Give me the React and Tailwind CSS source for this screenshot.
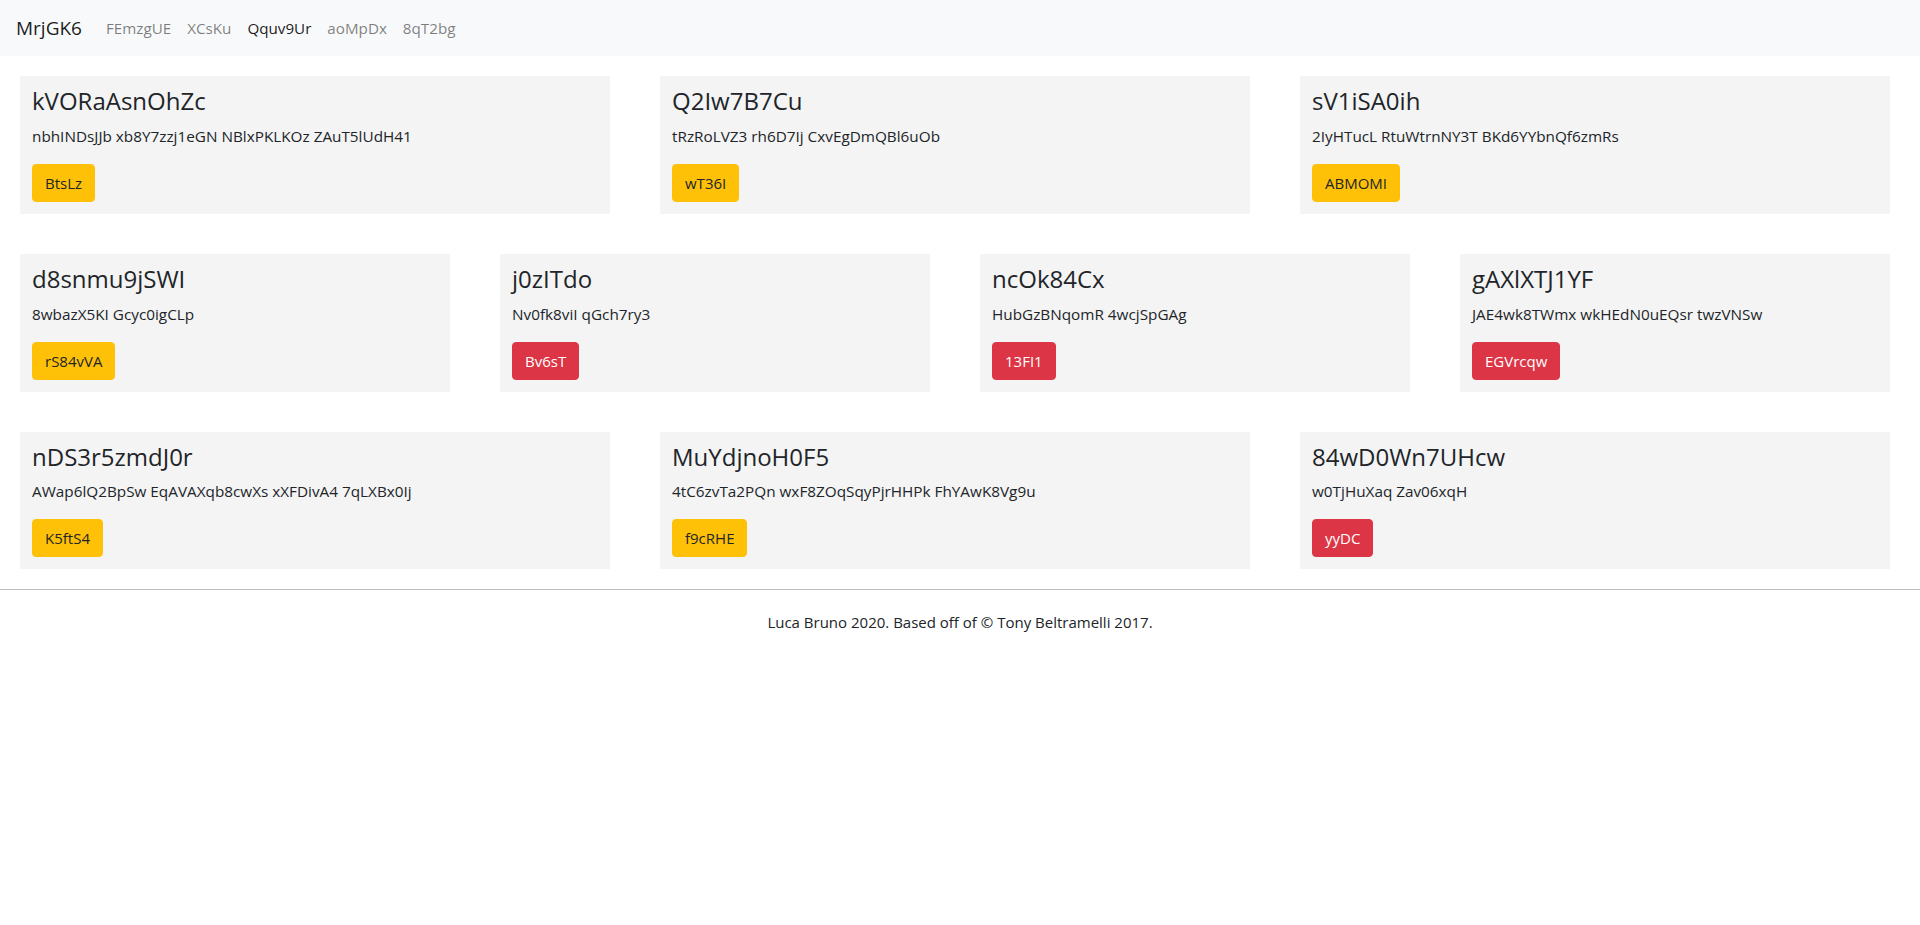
import React from "react";

const rows = [
  [
    { title: "kVORaAsnOhZc", text: "nbhINDsJJb xb8Y7zzj1eGN NBlxPKLKOz ZAuT5lUdH41", btn: "BtsLz", kind: "warning" },
    { title: "Q2Iw7B7Cu", text: "tRzRoLVZ3 rh6D7Ij CxvEgDmQBl6uOb", btn: "wT36I", kind: "warning" },
    { title: "sV1iSA0ih", text: "2IyHTucL RtuWtrnNY3T BKd6YYbnQf6zmRs", btn: "ABMOMI", kind: "warning" },
  ],
  [
    { title: "d8snmu9jSWI", text: "8wbazX5KI Gcyc0igCLp", btn: "rS84vVA", kind: "warning" },
    { title: "j0zITdo", text: "Nv0fk8viI qGch7ry3", btn: "Bv6sT", kind: "danger" },
    { title: "ncOk84Cx", text: "HubGzBNqomR 4wcjSpGAg", btn: "13FI1", kind: "danger" },
    { title: "gAXlXTJ1YF", text: "JAE4wk8TWmx wkHEdN0uEQsr twzVNSw", btn: "EGVrcqw", kind: "danger" },
  ],
  [
    { title: "nDS3r5zmdJ0r", text: "AWap6lQ2BpSw EqAVAXqb8cwXs xXFDivA4 7qLXBx0Ij", btn: "K5ftS4", kind: "warning" },
    { title: "MuYdjnoH0F5", text: "4tC6zvTa2PQn wxF8ZOqSqyPjrHHPk FhYAwK8Vg9u", btn: "f9cRHE", kind: "warning" },
    { title: "84wD0Wn7UHcw", text: "w0TjHuXaq Zav06xqH", btn: "yyDC", kind: "danger" },
  ],
];

const links = [
  { label: "FEmzgUE" },
  { label: "XCsKu" },
  { label: "Qquv9Ur", active: true },
  { label: "aoMpDx" },
  { label: "8qT2bg" },
];

function Card({ title, text, btn, kind }) {
  return (
    <div className="flex-1 bg-[#f4f4f4] px-[12px] pt-[11px] pb-[12px]">
      <h4 className="text-[24px] leading-[28.8px] font-medium text-[#212529] mb-[8px]">{title}</h4>
      <p className="text-[15.3px] leading-[24px] text-[#212529] mb-[16px]">{text}</p>
      <button
        className={
          kind === "danger"
            ? "bg-[#dc3545] text-white text-[15px] leading-[24px] px-[12px] py-[6px] rounded-[4px] border border-[#dc3545]"
            : "bg-[#ffc107] text-[#212529] text-[15px] leading-[24px] px-[12px] py-[6px] rounded-[4px] border border-[#ffc107]"
        }
      >
        {btn}
      </button>
    </div>
  );
}

export default function App() {
  return (
    <div className="min-h-screen bg-white text-[#212529] font-['Open_Sans','Noto_Sans',sans-serif]">
      {/* Navbar */}
      <nav className="h-[56px] bg-[#f8f9fa] flex items-center px-[16px]">
        <span className="text-[19px] leading-[30px] text-black/90 mr-[16px]">MrjGK6</span>
        <ul className="flex items-center">
          {links.map((l) => (
            <li key={l.label}>
              <a className={"block px-[8px] py-[8px] text-[15.2px] leading-[24px] " + (l.active ? "text-black/90" : "text-black/50")}>
                {l.label}
              </a>
            </li>
          ))}
        </ul>
      </nav>

      {/* Cards */}
      <div className="flex flex-col gap-[40px] pt-[20px] pl-[20px] pr-[30px]">
        {rows.map((row, i) => (
          <div key={i} className="flex gap-[50px]">
            {row.map((c) => (
              <Card key={c.title} {...c} />
            ))}
          </div>
        ))}
      </div>

      {/* Footer */}
      <hr className="mt-[20px] border-t border-[#bbbbbb]" />
      <footer className="text-center pt-[21px]">
        <p className="text-[15px] leading-[22px] text-[#212529]">Luca Bruno 2020. Based off of © Tony Beltramelli 2017.</p>
      </footer>
    </div>
  );
}
